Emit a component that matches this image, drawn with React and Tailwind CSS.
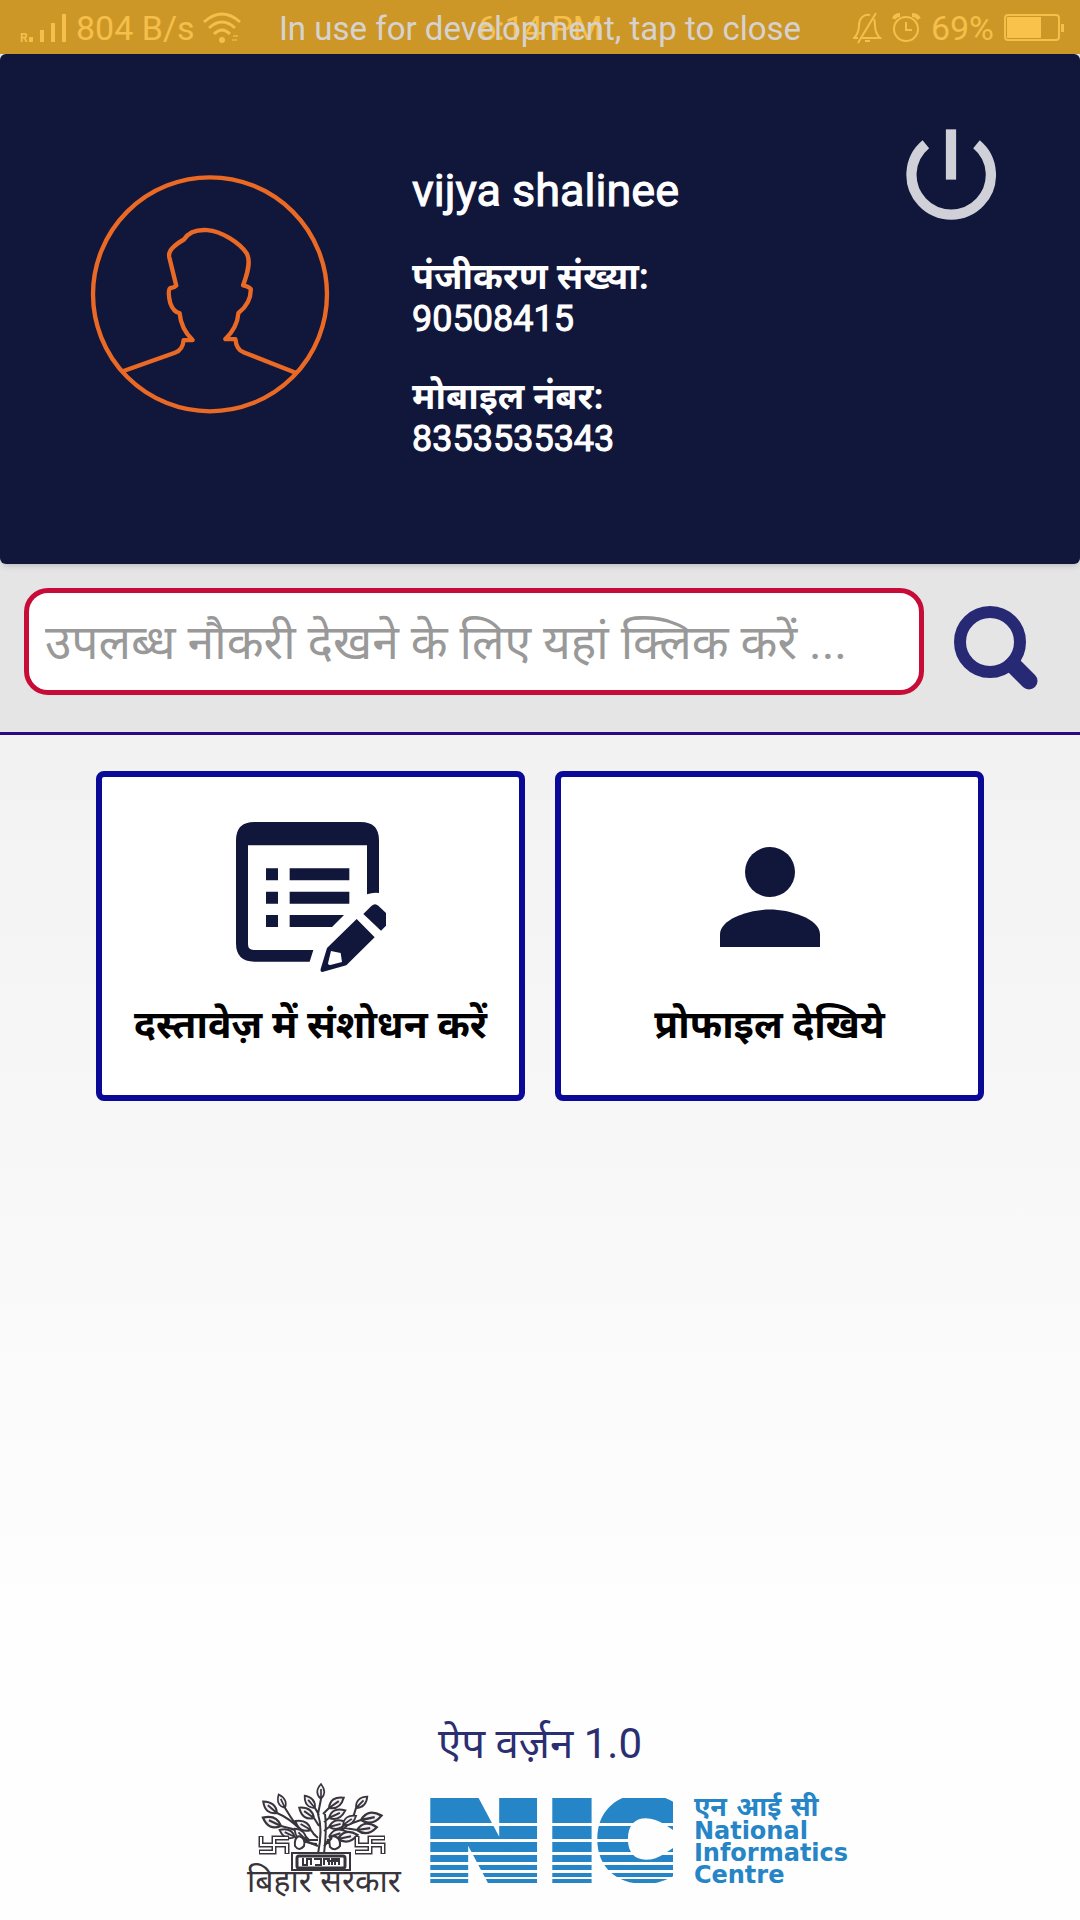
import React from 'react';

// Small icons of the status bar
const SignalIcon = () => (
  <svg width="48" height="32" viewBox="0 0 48 32" fill="#f5bf4a" aria-hidden="true">
    <text x="0" y="30" fontSize="12" fontWeight="700" fontFamily="Roboto, sans-serif">R</text>
    <rect x="9" y="25" width="4" height="5" />
    <rect x="20" y="18" width="4" height="12" />
    <rect x="31" y="11" width="4" height="19" />
    <rect x="42" y="2" width="4" height="28" />
  </svg>
);

const WifiIcon = () => (
  <svg width="38" height="32" viewBox="0 0 38 32" fill="none" stroke="#f5bf4a" strokeWidth="3" aria-hidden="true">
    <path d="M1 10 Q19 -6 37 10" />
    <path d="M6 16 Q19 4 32 16" />
    <path d="M11 22 Q19 14 27 22" />
    <circle cx="19" cy="28" r="3" fill="#f5bf4a" stroke="none" />
    <path d="M30 24h5M29 28h5" strokeWidth="2" opacity="0.6" />
  </svg>
);

const BellOffIcon = () => (
  <svg width="29" height="32" viewBox="0 0 29 32" fill="none" stroke="#f5bf4a" strokeWidth="2" aria-hidden="true">
    <path d="M17 3C10 2 6 7 6 13C6 19 5 22 1 26H5M9 26H27C23 22 22 19 22 13C22 11 22 9 21 7" />
    <path d="M23 1L5 31M12 29h5" />
  </svg>
);

const AlarmIcon = () => (
  <svg width="29" height="32" viewBox="0 0 29 32" fill="none" stroke="#f5bf4a" strokeWidth="2" aria-hidden="true">
    <circle cx="14" cy="17" r="12" />
    <path d="M14 10v8h6" />
    <path d="M2 7Q3 3 8 3M20 3Q25 3 27 7" strokeWidth="4" />
  </svg>
);

const BatteryIcon = () => (
  <svg width="60" height="28" viewBox="0 0 60 28" fill="none" aria-hidden="true">
    <rect x="1" y="1" width="54" height="25" rx="3" stroke="#f5bf4a" strokeWidth="2" />
    <rect x="3" y="3" width="34" height="21" fill="#f9c34b" />
    <rect x="57" y="10" width="3" height="8" fill="#f5bf4a" />
  </svg>
);

const Avatar = () => (
  <svg className="w-60 shrink-0" viewBox="62 75 718 714" fill="none" stroke="#ea6a25" strokeWidth="13" strokeLinejoin="round" role="img" aria-label="Avatar">
    <circle cx="421" cy="432" r="350" />
    <path d="M158 663L316 607Q340 598 342 569L369 569Q334 535 330 488Q312 486 302 458Q292 416 304 413Q315 412 320 406L299 320Q296 305 312 290Q322 280 343 268C360 242 385 238 413 240C455 243 510 278 531 310C544 334 533 370 520 405Q537 408 543 416Q544 458 506 488Q503 530 467 566L497 566Q500 598 521 605L681 668" />
  </svg>
);

const PowerIcon = () => (
  <svg width="90" height="92" viewBox="79 55 272 274" fill="none" stroke="#cfd0d8" strokeWidth="31" aria-hidden="true">
    <path d="M215 57V209" />
    <path d="M139 102A120 120 0 1 0 292 102" />
  </svg>
);

const SearchIcon = () => (
  <svg width="84" height="84" viewBox="0 0 84 84" fill="none" stroke="#272974" aria-hidden="true">
    <circle cx="36" cy="36" r="30" strokeWidth="12" />
    <path d="M59 59L75 75" strokeWidth="17" strokeLinecap="round" />
  </svg>
);

const DocumentEditIcon = () => (
  <svg width="150" height="150" viewBox="435 185 450 450" fill="#11163b" aria-hidden="true">
    <path
      fillRule="evenodd"
      d="M490 185H809Q864 185 864 240V398Q845 396 828 402V255H471V552Q471 569 488 569H667L656 604H490Q435 604 435 549V240Q435 185 490 185Z"
    />
    <path d="M525 324h36v36h-36zM525 394h36v36h-36zM525 464h36v36h-36zM596 324h179v36H596zM596 394h179v36H596zM596 464H759L723 500H596z" />
    <path d="M817 461L842 436Q852 427 862 436L885 458V496L870 511Z" />
    <path fillRule="evenodd" d="M797 476L851 531L766 615L694 635Q687 635 689 626L708 563ZM720 572L711 609Q711 615 718 614L753 605L749 578Z" />
  </svg>
);

const PersonIcon = () => (
  <svg width="150" height="150" viewBox="0 0 24 24" fill="#11163b" aria-hidden="true">
    <circle cx="12" cy="8" r="4" />
    <path d="M12 14C9 14 4 15.400 4 18V20H20V18C20 15.400 15 14 12 14Z" />
  </svg>
);

// [x, y, angle, length] of each leaf of the tree
const leaves = [
  [60, 15, -90, 15], [68, 24, -35, 18], [68, 34, -25, 18], [68, 43, -15, 18], [68, 53, -18, 18],
  [54, 24, -130, 16], [53, 34, -145, 18], [50, 46, -150, 18], [45, 56, -135, 16],
  [24, 24, -115, 15], [16, 29, -140, 18], [20, 42, -155, 20], [34, 53, -155, 17],
  [95, 24, -45, 16], [82, 41, -35, 16], [100, 36, -12, 21], [96, 46, -8, 20], [77, 55, -12, 20],
];

const BiharLogo = () => (
  <svg width="176" height="118" viewBox="0 0 176 118" fill="none" stroke="#38343c" role="img" aria-label="बिहार सरकार">
    <g transform="translate(25 2)">
      <g strokeWidth="2">
        <path d="M57 70Q62 45 57 30L60 15M63 70Q66 45 64 30M62 30L68 24M63 38L68 34M63 47L68 43M58 31L54 24M58 42L53 34M57 54Q52 50 50 46M56 60Q48 60 34 53M57 56L45 56M48 56Q36 44 24 24M40 46Q28 34 16 29M39 48Q30 44 20 42M64 58Q78 56 82 41M66 56L77 55M80 47Q92 38 95 24M86 41Q94 38 100 36M84 44L96 46" />
      </g>
      {leaves.map(([x, y, angle, length], i) => (
        <g key={i} transform={`translate(${x} ${y}) rotate(${angle}) scale(${length / 18})`} strokeWidth="2">
          <path d="M0 0Q8 -9 18 0Q8 8 0 0M0 0H12" fill="#f4eff4" />
        </g>
      ))}
      <path d="M38 52Q33 54 34 62Q38 68 43 62Q45 54 38 52M57 62L42 56M72 52Q67 55 69 63Q74 68 79 62Q80 53 72 52M63 62L71 54" strokeWidth="2" fill="#fff" />
      <rect x="31" y="69" width="58" height="17" fill="#fff" strokeWidth="2" />
      <rect x="36" y="72" width="48" height="12" rx="2" strokeWidth="3" />
      <path d="M42 74V81H46V75H50V81M53 75H60V81H54M63 81V75H68V81M71 81V75H78V81M74 75V81M66 77H78" strokeWidth="2" />
      {[-2, 94].map((x) => (
        <g key={x} transform={`translate(${x} 52)`}>
          <path d="M2 0V9H28V18M0 16H15V2H30" strokeWidth="5" />
          <path d="M2 1V9H28V17M1 16H15V2H29" stroke="#fff" strokeWidth="2" />
        </g>
      ))}
    </g>
    <text x="88" y="110" textAnchor="middle" fontSize="32" fill="#38343c" stroke="none" fontFamily="'Noto Sans', 'Noto Sans Devanagari', sans-serif">
      बिहार सरकार
    </text>
  </svg>
);

// [y, height] of the white bands that cut the letters
const stripes = [
  [0, 16], [41, 3], [57, 3], [70, 3], [80, 3], [88, 3], [95, 2], [101, 17],
];

const NicLogo = () => (
  <svg width="248" height="118" viewBox="0 0 248 118" role="img" aria-label="NIC">
    <g fill="#2585c7" stroke="#2585c7" fontFamily="'DejaVu Sans', sans-serif" fontWeight="700">
      <text x="-7" y="112" fontSize="145" strokeWidth="12">N</text>
      <text x="115" y="112" fontSize="145" strokeWidth="12">I</text>
      <text x="167" y="96" fontSize="106" strokeWidth="10">C</text>
    </g>
    {stripes.map(([y, height]) => (
      <rect key={y} x="0" y={y} width="248" height={height} fill="#fefefe" />
    ))}
  </svg>
);

const MenuCard = ({ icon, label }) => (
  <button
    type="button"
    className="flex h-[330px] flex-1 flex-col items-center rounded-lg border-6 border-[#0a0a96] bg-white pt-[45px] text-[39px] font-bold text-black"
  >
    {icon}
    <span className="mt-6 leading-[58px]">{label}</span>
  </button>
);

const Detail = ({ label, value }) => (
  <div className="mb-9 text-[36px] leading-[42px]">
    <dt className="font-bold">{label}</dt>
    <dd className="[-webkit-text-stroke:1px]">{value}</dd>
  </div>
);

function App() {
  return (
    <div className="flex min-h-screen flex-col bg-linear-to-b from-[#e8e8e8] to-[#fefefe] to-85% font-['Roboto','Noto_Sans','Noto_Sans_Devanagari',sans-serif]">
      {/* Status bar with the system notice over it */}
      <div className="relative flex h-[54px] items-center justify-between bg-[#cd9728] pt-[2px] pr-4 pl-5 text-[34px] text-[#f5bf4a]">
        <div className="flex items-center gap-2">
          <SignalIcon />
          <span>804 B/s</span>
          <WifiIcon />
        </div>
        <div className="flex items-center gap-[10px]">
          <BellOffIcon />
          <AlarmIcon />
          <span>69%</span>
          <BatteryIcon />
        </div>
        <span className="absolute inset-0 flex items-center justify-center pt-[2px]">6:14 PM</span>
        <button type="button" className="absolute inset-0 pt-1 text-center text-[33px] text-[#d6d2d0]">
          In use for development, tap to close
        </button>
      </div>

      {/* User details */}
      <div className="bg-[#e5e5e5]">
        <header className="flex h-[510px] items-start rounded-md bg-[#11163b] pr-[84px] pl-[90px] text-white shadow-md">
          <div className="mt-[121px]">
            <Avatar />
          </div>
          <div className="mt-[110px] ml-[82px] flex-1">
            <h1 className="mb-[38px] text-[45px] leading-[54px] [-webkit-text-stroke:1px]">vijya shalinee</h1>
            <dl>
              <Detail label="पंजीकरण संख्या:" value="90508415" />
              <Detail label="मोबाइल नंबर:" value="8353535343" />
            </dl>
          </div>
          <button type="button" aria-label="Log out" className="mt-[74px]">
            <PowerIcon />
          </button>
        </header>

        {/* Job search */}
        <form className="flex h-[171px] items-start border-b-3 border-[#2a0a80] pt-6 pr-[42px] pl-6">
          <input
            type="text"
            aria-label="नौकरी खोजें"
            placeholder="उपलब्ध नौकरी देखने के लिए यहां क्लिक करें ..."
            className="h-[107px] min-w-0 flex-1 rounded-3xl border-5 border-[#c60c37] bg-white px-4 pt-[2px] text-[48px] placeholder:text-[#999999]"
          />
          <button type="button" aria-label="Search" className="mt-[18px] ml-[30px]">
            <SearchIcon />
          </button>
        </form>
      </div>

      <main className="flex flex-1 gap-[30px] px-24 pt-9">
        <MenuCard icon={<DocumentEditIcon />} label="दस्तावेज़ में संशोधन करें" />
        <MenuCard icon={<PersonIcon />} label="प्रोफाइल देखिये" />
      </main>

      <footer className="flex flex-col items-center pb-5">
        <p className="text-[42px] leading-[60px] text-[#2b2f72]">ऐप वर्ज़न 1.0</p>
        <div className="mt-2 flex items-start pl-1">
          <BiharLogo />
          <div className="ml-[18px]">
            <NicLogo />
          </div>
          <div className="mt-3 ml-4 text-[24px] leading-[22px] font-bold text-[#2585c7] font-['DejaVu_Sans','Noto_Sans','Noto_Sans_Devanagari',sans-serif]">
            <p className="text-[27px] leading-[26px]">एन आई सी</p>
            <p>National</p>
            <p>Informatics</p>
            <p>Centre</p>
          </div>
        </div>
      </footer>
    </div>
  );
}

export default App;
